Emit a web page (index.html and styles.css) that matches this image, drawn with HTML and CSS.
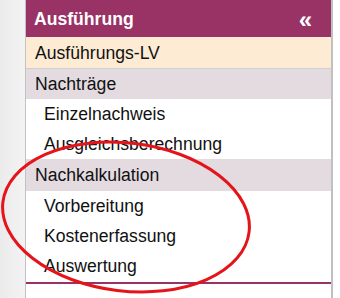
FILE: index.html
```html
<!DOCTYPE html>
<html>
<head>
<meta charset="utf-8">
<link rel="stylesheet" href="styles.css">
</head>
<body>
<div class="page">
  <div class="gutter"></div>
  <nav class="panel">
    <div class="head">
      <span class="title">Ausführung</span>
      <span class="collapse">«</span>
    </div>
    <div class="row active">Ausführungs-LV</div>
    <div class="row group">Nachträge</div>
    <div class="row sub">Einzelnachweis</div>
    <div class="row sub">Ausgleichsberechnung</div>
    <div class="row group g2">Nachkalkulation</div>
    <div class="row sub">Vorbereitung</div>
    <div class="row sub">Kostenerfassung</div>
    <div class="row sub last">Auswertung</div>
    <div class="rest"></div>
  </nav>
  <div class="side"></div>
</div>
<svg class="mark" width="340" height="298" viewBox="0 0 340 298">
  <ellipse cx="126" cy="217" rx="124" ry="74" transform="rotate(7 126 217)" fill="none" stroke="#e5141b" stroke-width="3"/>
</svg>
</body>
</html>
```
FILE: styles.css
```css
html, body {
  margin: 0;
  padding: 0;
  height: 100%;
  background: #ffffff;
  font-family: "Liberation Sans", Arial, sans-serif;
}
.page {
  display: flex;
  height: 298px;
  overflow: hidden;
}
.gutter {
  width: 25px;
  flex: none;
  background: linear-gradient(to right, #ebebeb, #f3f3f3);
}
.panel {
  width: 305px;
  flex: none;
  border-left: 1px solid #c2c2c2;
  border-right: 2px solid #c0c0c0;
  display: flex;
  flex-direction: column;
  background: #ffffff;
}
.side {
  flex: 1;
  background: #ffffff;
}
.head {
  height: 37px;
  background: #993366;
  color: #ffffff;
  display: flex;
  align-items: center;
  justify-content: space-between;
  padding: 0 19px 0 8px;
  box-sizing: border-box;
}
.title {
  font-weight: bold;
  font-size: 17.6px;
  padding-top: 1px;
}
.collapse {
  font-weight: bold;
  font-size: 24px;
  line-height: 1;
  padding-top: 2px;
}
.row {
  height: 30px;
  line-height: 30px;
  font-size: 17.6px;
  color: #111111;
  padding-left: 9px;
  white-space: nowrap;
}
.active {
  background: #fdebd3;
  height: 31px;
  line-height: 32px;
  border-bottom: 1px solid #cfcfcf;
}
.group {
  background: #e3dbe0;
}
.g2 {
  height: 32px;
  line-height: 32px;
}
.sub {
  padding-left: 18px;
}
.last {
  height: 31px;
  border-bottom: 2px solid #993366;
}
.rest {
  flex: 1;
}
.mark {
  position: absolute;
  left: 0;
  top: 0;
  pointer-events: none;
}
```
